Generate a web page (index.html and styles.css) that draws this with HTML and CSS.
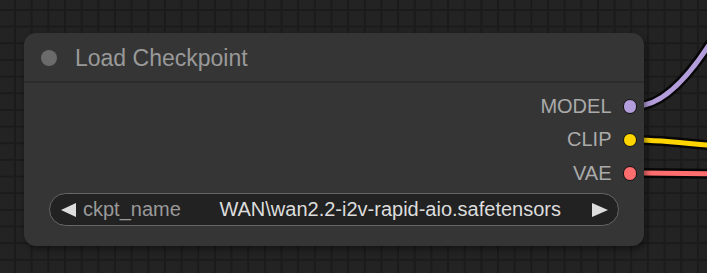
FILE: index.html
```html
<!DOCTYPE html>
<html>
<head>
<meta charset="utf-8">
<link rel="stylesheet" href="styles.css">
</head>
<body>
<div class="canvas">
  <svg class="links" width="707" height="273" viewBox="0 0 707 273">
    <g fill="none" stroke-linecap="round">
      <path class="shadow" d="M636 106 C665 106, 700 70, 740 -10"/>
      <path d="M636 106 C665 106, 700 70, 740 -10" stroke="#b39ddb" stroke-width="5"/>
      <path class="shadow" d="M636 140 C665 140, 690 144, 760 150"/>
      <path d="M636 140 C665 140, 690 144, 760 150" stroke="#ffd500" stroke-width="5"/>
      <path class="shadow" d="M636 173 C665 173, 690 173.5, 760 174.5"/>
      <path d="M636 173 C665 173, 690 173.5, 760 174.5" stroke="#ff6e6e" stroke-width="5"/>
    </g>
  </svg>
  <div class="node">
    <div class="title">
      <span class="title-dot"></span>
      <span class="title-text">Load Checkpoint</span>
    </div>
    <div class="body">
      <div class="outputs">
        <div class="slot"><span class="slot-label">MODEL</span><span class="slot-dot model"></span></div>
        <div class="slot"><span class="slot-label">CLIP</span><span class="slot-dot clip"></span></div>
        <div class="slot"><span class="slot-label">VAE</span><span class="slot-dot vae"></span></div>
      </div>
      <div class="widget">
        <span class="arrow left"></span>
        <span class="w-label">ckpt_name</span>
        <span class="w-value">WAN\wan2.2-i2v-rapid-aio.safetensors</span>
        <span class="arrow right"></span>
      </div>
    </div>
  </div>
</div>
</body>
</html>
```
FILE: styles.css
```css
html, body {
  margin: 0;
  padding: 0;
  background: #222;
}
.canvas {
  position: relative;
  width: 707px;
  height: 273px;
  overflow: hidden;
  background-color: #232323;
  background-image:
    linear-gradient(to right, #1b1b1b 2px, transparent 2px),
    linear-gradient(to bottom, #1b1b1b 2px, transparent 2px);
  background-size: 16.667px 16.667px;
  background-position: 14px 9px;
  font-family: "Liberation Sans", Arial, sans-serif;
}
.links {
  position: absolute;
  left: 0;
  top: 0;
}
.links .shadow {
  stroke: #000;
  stroke-width: 10;
  opacity: 0.8;
}
.node {
  position: absolute;
  left: 24px;
  top: 33px;
  width: 620px;
  height: 213px;
  box-sizing: border-box;
  background: #353535;
  border-radius: 12px;
  box-shadow: 2px 3px 6px rgba(0, 0, 0, 0.45);
  display: flex;
  flex-direction: column;
}
.title {
  height: 50px;
  box-sizing: border-box;
  border-bottom: 2px solid #2c2c2c;
  display: flex;
  align-items: center;
  padding-left: 17px;
  gap: 18px;
}
.title-dot {
  width: 16px;
  height: 16px;
  border-radius: 50%;
  background: #6b6b6b;
  margin-top: 2px;
}
.title-text {
  font-size: 23px;
  color: #999;
  margin-top: 2px;
}
.body {
  display: flex;
  flex-direction: column;
  padding: 7px 0 0 0;
}
.outputs {
  display: flex;
  flex-direction: column;
  align-items: flex-end;
  padding-right: 7px;
}
.slot {
  height: 33.33px;
  display: flex;
  align-items: center;
  gap: 11px;
}
.slot-label {
  font-size: 20px;
  color: #aaa;
}
.slot-dot {
  width: 12.5px;
  height: 12.5px;
  border-radius: 50%;
  border: 1px solid #111;
}
.model { background: #b39ddb; }
.clip { background: #ffd500; }
.vae { background: #ff6e6e; }
.widget {
  margin: 3px 25px 0 25px;
  height: 33.33px;
  box-sizing: border-box;
  border: 1.5px solid #666;
  border-radius: 17px;
  background: #222;
  display: flex;
  align-items: center;
  padding: 0 10px 0 11px;
  font-size: 20px;
}
.arrow {
  width: 0;
  height: 0;
  border-top: 7.5px solid transparent;
  border-bottom: 7.5px solid transparent;
}
.arrow.left {
  border-right: 15px solid #ddd;
}
.arrow.right {
  border-left: 16px solid #ddd;
}
.w-label {
  color: #999;
  margin-left: 7px;
}
.w-value {
  color: #ddd;
  margin-left: auto;
  margin-right: 31px;
}
```
